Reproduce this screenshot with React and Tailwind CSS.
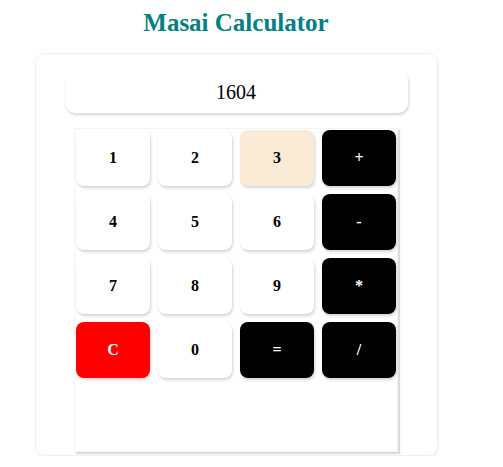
import React from 'react';

const keys = [
  { label: '1', tone: 'plain' },
  { label: '2', tone: 'plain' },
  { label: '3', tone: 'cream' },
  { label: '+', tone: 'dark' },
  { label: '4', tone: 'plain' },
  { label: '5', tone: 'plain' },
  { label: '6', tone: 'plain' },
  { label: '-', tone: 'dark' },
  { label: '7', tone: 'plain' },
  { label: '8', tone: 'plain' },
  { label: '9', tone: 'plain' },
  { label: '*', tone: 'dark' },
  { label: 'C', tone: 'red' },
  { label: '0', tone: 'plain' },
  { label: '=', tone: 'dark' },
  { label: '/', tone: 'dark' },
];

const tones = {
  plain: 'bg-white text-black',
  cream: 'bg-[#faebd7] text-black',
  dark: 'bg-black text-white',
  red: 'bg-[#ff0000] text-white',
};

export default function App() {
  return (
    <div className="w-[472px] bg-white font-['Liberation_Serif',serif]">
      <h2 className="pt-[9px] text-center text-[25px] leading-[28px] font-bold text-[#008080]">
        Masai Calculator
      </h2>

      {/* calculator body */}
      <div className="mx-auto mt-[16px] w-[403px] rounded-[10px] border border-[#f5eeee] pt-[17px] pb-[3px] shadow-[1px_2px_2px_#f7f0f0]">
        <div className="mx-auto flex h-[42px] w-[343px] items-center justify-center rounded-[10px] bg-white text-[20px] text-black shadow-[1px_2px_3px_#d6d6d6]">
          1604
        </div>

        <div className="mx-auto mt-[15px] h-[324px] w-[324px] border border-[#f4f4f4] p-[1px] shadow-[2px_2px_1px_#dcdcdc]">
          <div className="grid grid-cols-[repeat(4,74px)] grid-rows-[repeat(4,56px)] gap-[8px]">
            {keys.map((k) => (
              <button
                key={k.label}
                className={`flex items-center justify-center rounded-[8px] text-[16px] font-bold shadow-[1px_2px_3px_#d4d4d4] ${tones[k.tone]}`}
              >
                {k.label}
              </button>
            ))}
          </div>
        </div>
      </div>
    </div>
  );
}
